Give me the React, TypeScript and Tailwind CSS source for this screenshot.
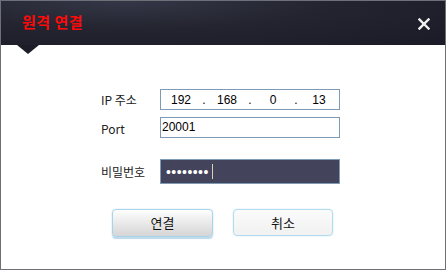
const KR = "font-['Noto_Sans_CJK_KR','Liberation_Sans',sans-serif]";

const IpField = ({ parts }: { parts: string[] }) => (
  <div className="w-[180px] h-[21px] border border-[#7f9ab4] bg-white flex items-center font-['Liberation_Sans',sans-serif] text-[12px] text-black">
    {parts.map((p, i) => (
      <div key={i} className="flex items-center">
        {i > 0 && <span className="w-[6px] text-center">.</span>}
        <span className="w-[40px] text-center">{p}</span>
      </div>
    ))}
  </div>
);

export default function App() {
  return (
    <div className={`w-[446px] h-[270px] border border-[#6f6f7a] bg-white flex flex-col ${KR}`}>
      {/* title bar */}
      <div className="relative h-[44px] shrink-0 bg-[radial-gradient(ellipse_at_28%_0%,#353747_0%,#23242f_45%,#1b1b27_100%)] flex items-center justify-between pl-[21px] pr-[15px]">
        <span className="text-[15px] font-bold text-[#ff0a0a] tracking-[0.5px] pb-[1px]">원격 연결</span>
        <svg width="12" height="12" viewBox="0 0 12 12" className="mt-[1px]">
          <path d="M1.5 1.5 L10.5 10.5 M10.5 1.5 L1.5 10.5" stroke="#f2f2f2" strokeWidth="2.4" strokeLinecap="square" />
        </svg>
        <svg width="22" height="9" viewBox="0 0 22 9" className="absolute left-[16px] top-[44px]">
          <path d="M0 0 H22 L11 9 Z" fill="#1d1d2a" />
        </svg>
      </div>

      {/* form */}
      <div className="pl-[100px] pt-[44px] flex flex-col text-[12px] text-[#222]">
        <div className="flex items-center">
          <span className="w-[59px]">IP 주소</span>
          <IpField parts={["192", "168", "0", "13"]} />
        </div>
        <div className="flex items-center mt-[7px]">
          <span className="w-[59px] pt-[3px]">Port</span>
          <div className="w-[180px] h-[21px] border border-[#7f9ab4] bg-white px-[1px] pt-[1px] font-['Liberation_Sans',sans-serif] text-[12px] text-black leading-[16px]">
            20001
          </div>
        </div>
        <div className="flex items-center mt-[21px]">
          <span className="w-[59px]">비밀번호</span>
          <div className="w-[180px] h-[25px] border border-[#7f9ab4] bg-[#43445b] flex items-center pl-[5px]">
            <span className="font-['Liberation_Sans',sans-serif] text-[14px] text-white tracking-[0.45px] leading-none">••••••••</span>
            <span className="w-[1px] h-[15px] bg-[#d8d0ae] ml-[3px]" />
          </div>
        </div>
      </div>

      {/* buttons */}
      <div className="flex items-start gap-[20px] pl-[111px] mt-[25px]">
        <button className="w-[101px] h-[28px] rounded-[4px] border border-[#a9d3ea] bg-[linear-gradient(#fefefe,#d5d5d5)] shadow-[0_0_2px_#c4e2f3,0_2px_1px_#bcd8ea] text-[13px] text-[#111]">
          연결
        </button>
        <button className="w-[100px] h-[27px] rounded-[4px] border border-[#b2dbef] bg-[linear-gradient(#fbfbfb,#f1f1f1)] shadow-[0_0_2px_#cfe8f5] text-[13px] text-[#111]">
          취소
        </button>
      </div>
    </div>
  );
}
